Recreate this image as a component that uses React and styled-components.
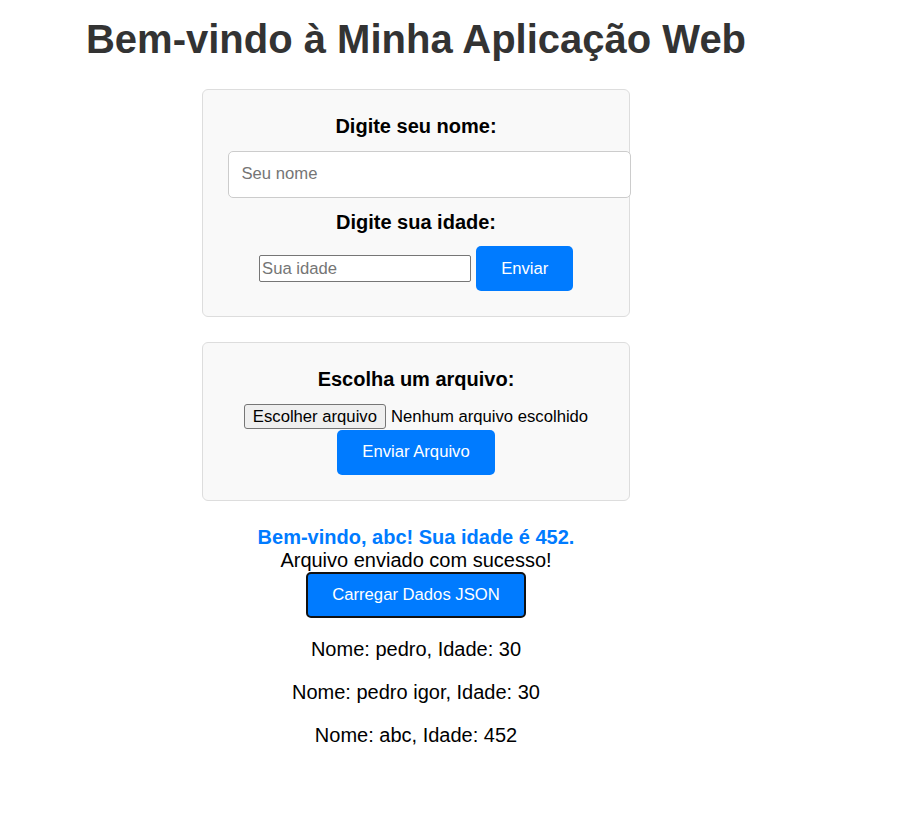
import React from 'react'
import styled, { createGlobalStyle } from 'styled-components'

const GlobalStyle = createGlobalStyle`
  body {
    margin: 0;
    font-family: "Liberation Sans", Arial, sans-serif;
    font-size: 20px;
    color: #000;
    background: #fff;
  }
`

const Page = styled.div`
  width: 832px;
  text-align: center;
`

const Title = styled.h1`
  margin: 17px 0 27px;
  font-size: 40px;
  font-weight: bold;
  color: #333;
`

const Card = styled.div`
  width: 376px;
  margin: 0 auto 25px;
  padding: 25px;
  background: #f9f9f9;
  border: 1px solid #ddd;
  border-radius: 6px;
  text-align: center;
`

const Label = styled.label`
  display: block;
  margin-bottom: 12.5px;
  font-weight: bold;
  font-size: 20px;
`

const NameInput = styled.input`
  display: block;
  width: 100%;
  margin: 0 0 13px;
  padding: 12.5px;
  font-family: inherit;
  font-size: 16.67px;
  border: 1px solid #ccc;
  border-radius: 5px;
  background: #fff;
  &::placeholder {
    color: #757575;
  }
`

const AgeRow = styled.div``

const AgeInput = styled.input`
  width: 205px;
  padding: 2.5px;
  font-family: inherit;
  font-size: 16.67px;
  border: 1px solid #767676;
  border-radius: 2px;
  background: #fff;
  vertical-align: baseline;
  &::placeholder {
    color: #757575;
  }
`

const Button = styled.button`
  display: inline-block;
  padding: ${(p) => (p.$focused ? '11px 24px' : '12.5px 25px')};
  font-family: inherit;
  font-size: 16.67px;
  color: #fff;
  background: #007bff;
  border: ${(p) => (p.$focused ? '2px solid #111' : 'none')};
  border-radius: 5px;
  cursor: pointer;
`

const FileRow = styled.div`
  display: flex;
  justify-content: center;
  align-items: center;
  gap: 5px;
  height: 26px;
  font-size: 16.67px;
`

const FileButton = styled.span`
  padding: 2px 8px;
  background: #efefef;
  border: 1px solid #767676;
  border-radius: 3px;
  line-height: 19px;
`

const Messages = styled.div`
  text-align: center;
`

const WelcomeText = styled.div`
  font-weight: bold;
  color: #007bff;
`

const SuccessText = styled.div``

const PersonItem = styled.p`
  margin: 20px 0;
`

const people = [
  { nome: 'pedro', idade: 30 },
  { nome: 'pedro igor', idade: 30 },
  { nome: 'abc', idade: 452 },
]

export default function App() {
  return (
    <Page>
      <GlobalStyle />
      <Title>Bem-vindo à Minha Aplicação Web</Title>

      <Card>
        <Label>Digite seu nome:</Label>
        <NameInput type="text" placeholder="Seu nome" />
        <Label>Digite sua idade:</Label>
        <AgeRow>
          <AgeInput type="text" placeholder="Sua idade" />{' '}
          <Button>Enviar</Button>
        </AgeRow>
      </Card>

      <Card>
        <Label>Escolha um arquivo:</Label>
        <FileRow>
          <FileButton>Escolher arquivo</FileButton>
          <span>Nenhum arquivo escolhido</span>
        </FileRow>
        <Button>Enviar Arquivo</Button>
      </Card>

      <Messages>
        <WelcomeText>Bem-vindo, abc! Sua idade é 452.</WelcomeText>
        <SuccessText>Arquivo enviado com sucesso!</SuccessText>
        <Button $focused>Carregar Dados JSON</Button>
        {people.map((p) => (
          <PersonItem key={p.nome}>
            Nome: {p.nome}, Idade: {p.idade}
          </PersonItem>
        ))}
      </Messages>
    </Page>
  )
}
